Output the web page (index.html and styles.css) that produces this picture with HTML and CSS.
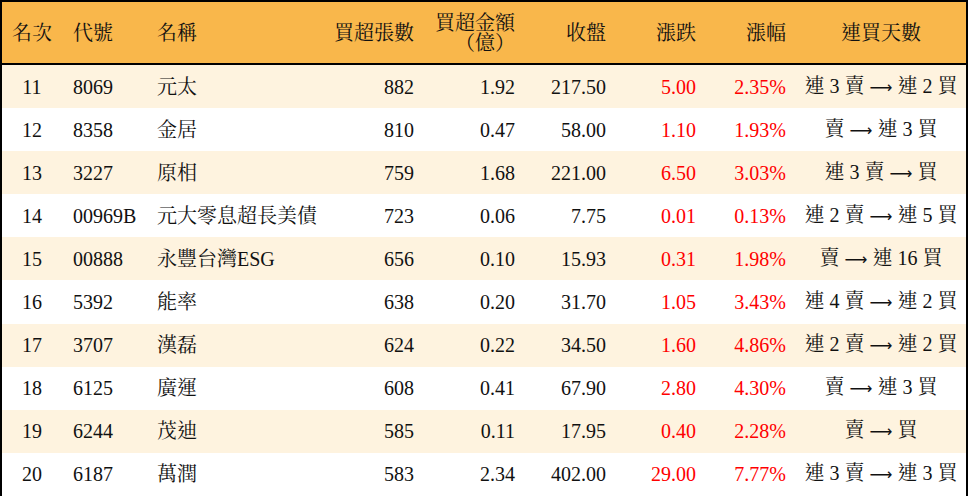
FILE: index.html
```html
<!DOCTYPE html>
<html lang="zh-Hant">
<head>
<meta charset="utf-8">
<title>買超排行</title>
<link rel="stylesheet" href="styles.css">
</head>
<body>
<table class="rank">
  <colgroup>
    <col class="w-rank"><col class="w-code"><col class="w-name"><col class="w-vol"><col class="w-amt"><col class="w-close"><col class="w-chg"><col class="w-pct"><col class="w-days">
  </colgroup>
  <thead>
    <tr>
      <th class="c">名次</th>
      <th class="l">代號</th>
      <th class="l">名稱</th>
      <th class="r">買超張數</th>
      <th class="r">買超金額<br>（億）</th>
      <th class="r">收盤</th>
      <th class="r">漲跌</th>
      <th class="r">漲幅</th>
      <th class="c">連買天數</th>
    </tr>
  </thead>
  <tbody>
    <tr><td class="c">11</td><td class="l">8069</td><td class="l">元太</td><td class="r">882</td><td class="r">1.92</td><td class="r">217.50</td><td class="r up">5.00</td><td class="r up">2.35%</td><td class="c">連 3 賣 <span class="arr">⟶</span> 連 2 買</td></tr>
    <tr><td class="c">12</td><td class="l">8358</td><td class="l">金居</td><td class="r">810</td><td class="r">0.47</td><td class="r">58.00</td><td class="r up">1.10</td><td class="r up">1.93%</td><td class="c">賣 <span class="arr">⟶</span> 連 3 買</td></tr>
    <tr><td class="c">13</td><td class="l">3227</td><td class="l">原相</td><td class="r">759</td><td class="r">1.68</td><td class="r">221.00</td><td class="r up">6.50</td><td class="r up">3.03%</td><td class="c">連 3 賣 <span class="arr">⟶</span> 買</td></tr>
    <tr><td class="c">14</td><td class="l">00969B</td><td class="l">元大零息超長美債</td><td class="r">723</td><td class="r">0.06</td><td class="r">7.75</td><td class="r up">0.01</td><td class="r up">0.13%</td><td class="c">連 2 賣 <span class="arr">⟶</span> 連 5 買</td></tr>
    <tr><td class="c">15</td><td class="l">00888</td><td class="l">永豐台灣ESG</td><td class="r">656</td><td class="r">0.10</td><td class="r">15.93</td><td class="r up">0.31</td><td class="r up">1.98%</td><td class="c">賣 <span class="arr">⟶</span> 連 16 買</td></tr>
    <tr><td class="c">16</td><td class="l">5392</td><td class="l">能率</td><td class="r">638</td><td class="r">0.20</td><td class="r">31.70</td><td class="r up">1.05</td><td class="r up">3.43%</td><td class="c">連 4 賣 <span class="arr">⟶</span> 連 2 買</td></tr>
    <tr><td class="c">17</td><td class="l">3707</td><td class="l">漢磊</td><td class="r">624</td><td class="r">0.22</td><td class="r">34.50</td><td class="r up">1.60</td><td class="r up">4.86%</td><td class="c">連 2 賣 <span class="arr">⟶</span> 連 2 買</td></tr>
    <tr><td class="c">18</td><td class="l">6125</td><td class="l">廣運</td><td class="r">608</td><td class="r">0.41</td><td class="r">67.90</td><td class="r up">2.80</td><td class="r up">4.30%</td><td class="c">賣 <span class="arr">⟶</span> 連 3 買</td></tr>
    <tr><td class="c">19</td><td class="l">6244</td><td class="l">茂迪</td><td class="r">585</td><td class="r">0.11</td><td class="r">17.95</td><td class="r up">0.40</td><td class="r up">2.28%</td><td class="c">賣 <span class="arr">⟶</span> 買</td></tr>
    <tr><td class="c">20</td><td class="l">6187</td><td class="l">萬潤</td><td class="r">583</td><td class="r">2.34</td><td class="r">402.00</td><td class="r up">29.00</td><td class="r up">7.77%</td><td class="c">連 3 賣 <span class="arr">⟶</span> 連 3 買</td></tr>
  </tbody>
</table>
</body>
</html>
```
FILE: styles.css
```css
html, body {
  margin: 0;
  padding: 0;
  background: #ffffff;
}

.rank {
  width: 968px;
  table-layout: fixed;
  border-collapse: separate;
  border-spacing: 0;
  border: 2px solid #000;
  font-family: "Liberation Serif", "Noto Serif CJK TC", "Noto Sans CJK TC", serif;
  font-size: 20px;
  color: #111;
}

.w-rank { width: 60px; }
.w-code { width: 84px; }
.w-name { width: 184px; }
.w-vol { width: 94px; }
.w-amt { width: 101px; }
.w-close { width: 91px; }
.w-chg { width: 90px; }
.w-pct { width: 90px; }
.w-days { width: 170px; }

.rank th {
  background: #f9b74b;
  font-weight: normal;
  height: 61px;
  padding: 0;
  line-height: 20px;
  border-bottom: 2px solid #000;
  vertical-align: middle;
  white-space: nowrap;
}

.rank td {
  height: 43.1px;
  padding: 0;
  line-height: 22px;
  vertical-align: middle;
  white-space: nowrap;
}

.rank tbody tr:nth-child(odd) td {
  background: #fef3df;
}

.c { text-align: center; }
.l { text-align: left; padding-left: 11px !important; }
.r { text-align: right; padding-right: 10px !important; }

.up { color: #ff0000; }

.arr {
  font-family: "DejaVu Sans", sans-serif;
  font-size: 16px;
}
```
